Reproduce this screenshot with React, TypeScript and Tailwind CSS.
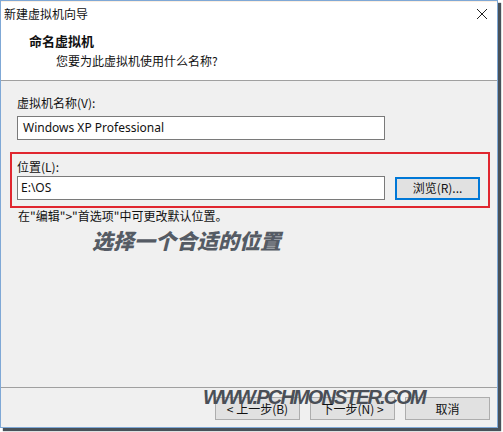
import React from 'react';

const cjk = { fontFamily: '"Noto Sans CJK SC", "Noto Sans", sans-serif' };

const Btn = ({ children, focus }: { children: React.ReactNode; focus?: boolean }) => (
  <div
    className={`flex items-center justify-center h-[23px] w-[85px] bg-[#e1e1e1] text-[12px] text-[#111] ${
      focus ? 'border-2 border-[#0078d7]' : 'border border-[#adadad]'
    }`}
  >
    {children}
  </div>
);

export default function App() {
  return (
    <div className="w-[503px] h-[432px] bg-white" style={cjk}>
      <div className="w-[498px] h-[428px] flex flex-col border border-[#7fa8d6] bg-[#f0f0f0] shadow-[3px_3px_1px_rgba(40,50,60,0.85)]">
        {/* title bar */}
        <div className="h-[26px] bg-white flex items-center justify-between pl-[3px] pr-[9px] border-t border-[#fbeee0]">
          <span className="text-[12px] text-[#111] mt-[-2px]">新建虚拟机向导</span>
          <svg width="12" height="12" viewBox="0 0 12 12" className="mt-[-1px]">
            <path d="M1 1 L11 11 M11 1 L1 11" stroke="#222" strokeWidth="1" />
          </svg>
        </div>
        {/* header */}
        <div className="h-[54px] bg-white border-b border-[#a0a0a0] pl-[28px] pt-[5px]">
          <div className="text-[13px] font-bold text-[#111] leading-[18px]">命名虚拟机</div>
          <div className="text-[12px] text-[#111] leading-[18px] pl-[27px] mt-[2px]">您要为此虚拟机使用什么名称?</div>
        </div>
        {/* body */}
        <div className="flex-1 flex flex-col pl-[16px] pt-[14px]">
          <div className="text-[12px] text-[#111] leading-[16px]">虚拟机名称(V):</div>
          <div className="mt-[5px] w-[368px] h-[24px] bg-white border border-[#7a7a7a] flex items-center pl-[5px] text-[12px] text-[#111]" style={{ fontFamily: '"Noto Sans", sans-serif' }}>
            Windows XP Professional
          </div>
          <div className="ml-[-7px] mt-[12px] w-[480px] h-[56px] border-2 border-[#e0262f] pl-[5px] pt-[5px]">
            <div className="text-[12px] text-[#111] leading-[16px]">位置(L):</div>
            <div className="mt-[1px] flex items-center gap-[10px]">
              <div className="w-[368px] h-[24px] bg-white border border-[#7a7a7a] flex items-center pl-[3px] text-[12px] text-[#111]" style={{ fontFamily: '"Noto Sans", sans-serif' }}>
                E:\OS
              </div>
              <Btn focus>浏览(R)...</Btn>
            </div>
          </div>
          <div className="text-[12px] text-[#111] leading-[14px] mt-[1px] pl-[1px]">在"编辑"&gt;"首选项"中可更改默认位置。</div>
          <div className="ml-[75px] mt-[5px] text-[21px] leading-[24px] font-black italic text-[#555b64]">选择一个合适的位置</div>
        </div>
        {/* footer */}
        <div className="relative h-[40px] border-t border-[#a0a0a0] flex justify-end items-start gap-[10px] pr-[7px] pt-[9px]">
          <Btn>&lt; 上一步(B)</Btn>
          <Btn>下一步(N) &gt;</Btn>
          <Btn>取消</Btn>
          <div
            className="absolute left-[202px] top-[-2px] text-[20px] leading-[22px] font-bold italic text-[#4a4f57] tracking-[-1.85px]"
            style={{ fontFamily: '"Liberation Sans", Arial, sans-serif' }}
          >
            WWW.PCHMONSTER.COM
          </div>
        </div>
      </div>
    </div>
  );
}
